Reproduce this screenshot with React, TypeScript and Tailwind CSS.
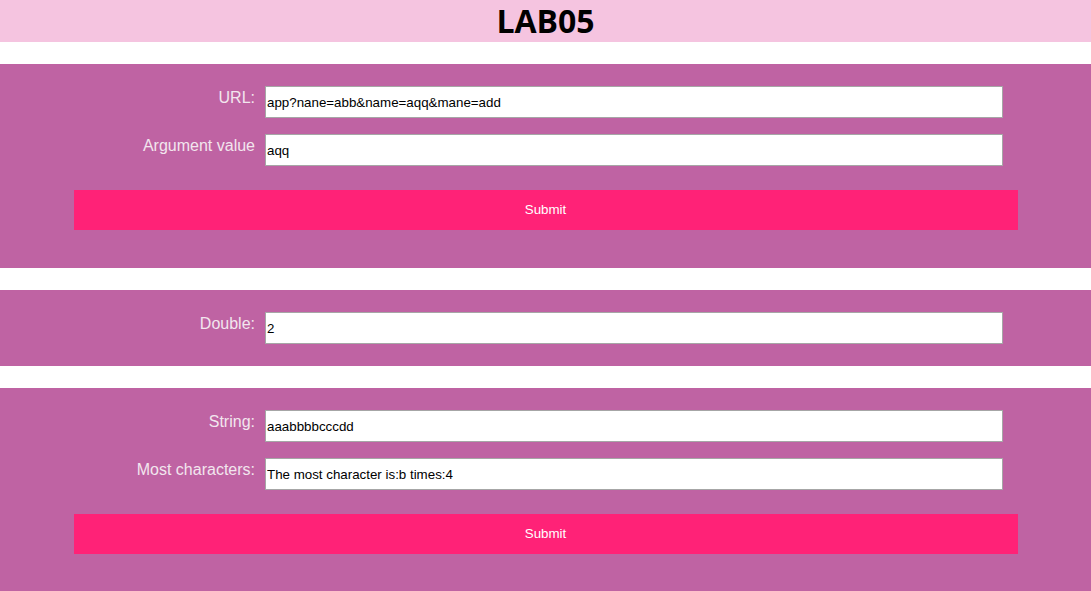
import React from "react";

const labelCls =
  "w-[265px] shrink-0 pr-[10px] text-right text-[16px] leading-[18px] text-[#f2e6ee] pt-[3px]";
const inputCls =
  "w-[738px] h-[32px] bg-white border border-[#a6a6a6] px-[1px] text-[13.33px] text-black outline-none";

function Row({ label, value }: { label: string; value: string }) {
  return (
    <div className="flex items-start">
      <label className={labelCls}>{label}</label>
      <input className={inputCls} defaultValue={value} readOnly />
    </div>
  );
}

function SubmitBtn() {
  return (
    <button className="mx-auto mt-[24px] block h-[40px] w-[944px] bg-[#ff2277] text-[13.33px] text-white">
      Submit
    </button>
  );
}

export default function App() {
  return (
    <div className="min-h-screen bg-white" style={{ fontFamily: '"Liberation Sans", Arial, sans-serif' }}>
      <div className="flex h-[42px] items-center justify-center bg-[#f5c4e0]">
        <h1
          className="text-[32px] font-bold leading-none text-black"
          style={{ fontFamily: '"Open Sans", "Noto Sans", sans-serif' }}
        >
          LAB05
        </h1>
      </div>

      <div className="mt-[22px] bg-[#bf63a3] pt-[22px] pb-[38px]">
        <div className="flex flex-col gap-[16px]">
          <Row label="URL:" value="app?nane=abb&name=aqq&mane=add" />
          <Row label="Argument value" value="aqq" />
        </div>
        <SubmitBtn />
      </div>

      <div className="mt-[22px] bg-[#bf63a3] py-[22px]">
        <Row label="Double:" value="2" />
      </div>

      <div className="mt-[22px] bg-[#bf63a3] pt-[22px] pb-[38px]">
        <div className="flex flex-col gap-[16px]">
          <Row label="String:" value="aaabbbbcccdd" />
          <Row label="Most characters:" value="The most character is:b times:4" />
        </div>
        <SubmitBtn />
      </div>
    </div>
  );
}
